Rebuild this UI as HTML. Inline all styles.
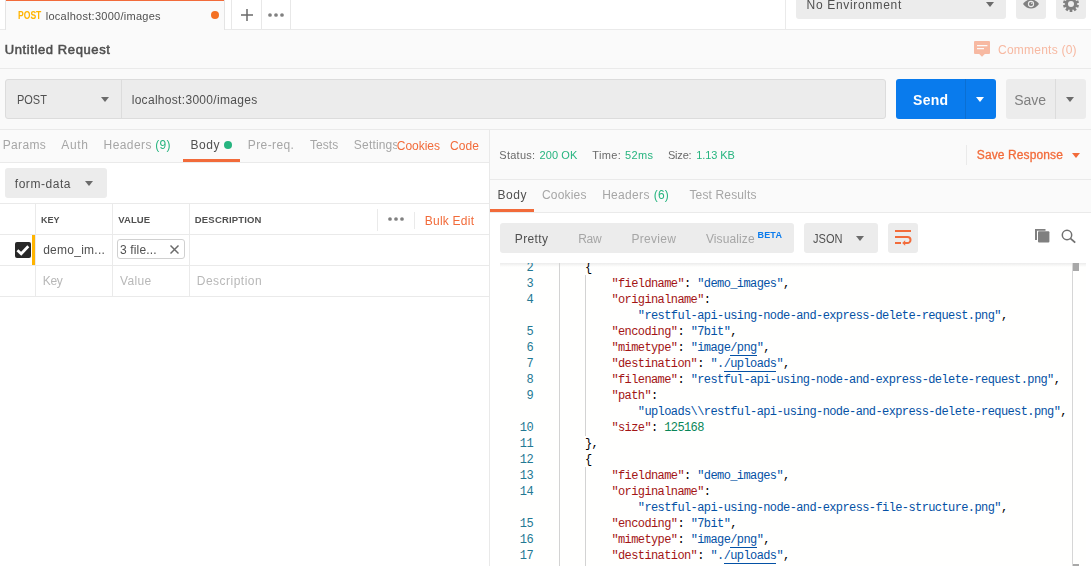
<!DOCTYPE html>
<html>
<head>
<meta charset="utf-8">
<title>Postman</title>
<style>
*{box-sizing:border-box;margin:0;padding:0}
html,body{width:1091px;height:566px;overflow:hidden;background:#fff}
body{position:relative;font-family:"Liberation Sans",sans-serif;font-size:12px;color:#505050}
.abs{position:absolute}
.t{position:absolute;white-space:nowrap;line-height:1}
/* top tab bar */
#tabbar{left:0;top:0;width:1091px;height:30px;background:#fff;border-bottom:1px solid #eaeaea}
#tab1{left:5px;top:0;width:220px;height:30px;background:#fafafa;border-left:1px solid #e4e4e4;border-right:1px solid #e4e4e4}
#tab1o{left:6px;top:0;width:218px;height:1px;background:#f26b3a}
#tabplus{left:231px;top:-3px;width:31px;height:33px;border:1px solid #e8e8e8;border-radius:3px 0 0 0}
#tabmore{left:261px;top:-3px;width:30px;height:33px;border:1px solid #e8e8e8;border-radius:0 3px 0 0}
#envsep{left:785px;top:0;width:1px;height:30px;background:#eaeaea}
#env{left:796px;top:-12px;width:210px;height:30.5px;background:#ececec;border-radius:3px}
#eye{left:1016px;top:-12px;width:30px;height:30.5px;background:#ececec;border-radius:3px}
#gear{left:1056px;top:-12px;width:30px;height:30.5px;background:#ececec;border-radius:3px}
/* request name row */
#namerow{left:0;top:30px;width:1091px;height:39px;background:#fafafa;border-bottom:1px solid #eaeaea}
/* url row */
#urlrow{left:0;top:69px;width:1091px;height:61px;background:#fafafa;border-bottom:1px solid #eaeaea}
#urlbar{left:5px;top:79px;width:881px;height:40px;background:#ececec;border:1px solid #dcdcdc;border-radius:3px}
#urlsep{left:121px;top:79px;width:1px;height:40px;background:#dcdcdc}
#send{left:896px;top:79px;width:100px;height:40px;background:#097bed;border-radius:3px}
#sendsep{left:965px;top:79px;width:1px;height:40px;background:#0a6fd3}
#save{left:1006px;top:79px;width:80px;height:40px;background:#ececec;border-radius:3px}
#savesep{left:1055px;top:79px;width:1px;height:40px;background:#dcdcdc}
/* left pane */
#lefttabs{left:0;top:130px;width:489px;height:33px;background:#fafafa;border-bottom:1px solid #eaeaea}
#bodyul{left:183px;top:159px;width:57px;height:3px;background:#f26b3a}
#formdata{left:5px;top:168px;width:102px;height:30px;background:#ececec;border-radius:3px}
.hl{position:absolute;left:0;width:489px;height:1px;background:#eaeaea}
.vl{position:absolute;width:1px;background:#eaeaea}
/* right pane */
#rsep{left:489px;top:130px;width:1px;height:436px;background:#e9e9e9}
#statusrow{left:490px;top:130px;width:601px;height:50px;background:#fafafa;border-bottom:1px solid #eaeaea}
#rtabs{left:490px;top:180px;width:601px;height:33px;background:#fafafa;border-bottom:1px solid #eaeaea}
#rbodyul{left:490px;top:209px;width:44px;height:3px;background:#f26b3a}
#viewgrp{left:500px;top:223px;width:294px;height:29.6px;background:#ececec;border-radius:3px}
#jsonbtn{left:804px;top:223px;width:74px;height:29.6px;background:#ececec;border-radius:3px}
#wrapbtn{left:888px;top:223px;width:30px;height:29.6px;background:#ececec;border-radius:3px}
#editor{left:500px;top:263px;width:586px;height:303px;overflow:hidden;background:#fffffe}
#edshadow{left:0;top:0;width:586px;height:4px;background:linear-gradient(to bottom,#ececec,rgba(255,255,254,0))}
.ln{position:absolute;left:0;width:33px;text-align:right;color:#237893;font-family:"Liberation Mono",monospace;font-size:12px;letter-spacing:-0.6px;line-height:16px;height:16px;white-space:pre}
.cl{position:absolute;left:32.200px;color:#000;font-family:"Liberation Mono",monospace;font-size:12px;letter-spacing:-0.6px;line-height:16px;height:16px;white-space:pre}
.k{color:#a31515}.s{color:#0451a5}.n{color:#098658}
.u{border-bottom:1px solid #0451a5}
.guide{position:absolute;width:1px;background:#d3d3d3}
</style>
</head>
<body>
<!-- top tab bar -->
<div id="tabbar" class="abs"></div>
<div id="tab1" class="abs"></div>
<div id="tab1o" class="abs"></div>
<div class="abs" style="left:210.700px;top:10.700px;width:8.600px;height:8.600px;border-radius:50%;background:#f47023"></div>
<div id="tabplus" class="abs"></div>
<div id="tabmore" class="abs"></div>
<svg class="abs" style="left:240px;top:8px" width="14" height="14" viewBox="0 0 14 14"><path d="M7 1v12M1 7h12" stroke="#6b6b6b" stroke-width="1.5" fill="none"/></svg>
<svg class="abs" style="left:268px;top:13px" width="16" height="4" viewBox="0 0 16 4"><circle cx="2" cy="2" r="1.85" fill="#808080"/><circle cx="8" cy="2" r="1.85" fill="#808080"/><circle cx="14" cy="2" r="1.85" fill="#808080"/></svg>
<div id="envsep" class="abs"></div>
<div id="env" class="abs"></div>
<svg class="abs" style="left:986px;top:2.4px" width="8" height="5" viewBox="0 0 8 5"><path d="M0 0h8L4 5z" fill="#6b6b6b"/></svg>
<div id="eye" class="abs"></div>
<div id="gear" class="abs"></div>
<svg class="abs" style="left:1023px;top:-0.8px" width="16" height="10" viewBox="0 0 16 9.200"><path d="M0 4.600C2.400 1.400 5 0 8 0s5.600 1.400 8 4.600C13.600 7.800 11 9.200 8 9.200S2.400 7.800 0 4.600z" fill="#808080"/><circle cx="8" cy="4.600" r="3.150" fill="#ececec"/><circle cx="8" cy="4.600" r="2.100" fill="#808080"/><circle cx="8.800" cy="3.900" r="0.700" fill="#ececec"/></svg>
<svg class="abs" style="left:1062px;top:-4.900px" width="18" height="18" viewBox="-9 -9 18 18"><g fill="#808080"><circle r="6"/><rect x="-1.350" y="-8" width="2.700" height="4" transform="rotate(0)"/><rect x="-1.350" y="-8" width="2.700" height="4" transform="rotate(36)"/><rect x="-1.350" y="-8" width="2.700" height="4" transform="rotate(72)"/><rect x="-1.350" y="-8" width="2.700" height="4" transform="rotate(108)"/><rect x="-1.350" y="-8" width="2.700" height="4" transform="rotate(144)"/><rect x="-1.350" y="-8" width="2.700" height="4" transform="rotate(180)"/><rect x="-1.350" y="-8" width="2.700" height="4" transform="rotate(216)"/><rect x="-1.350" y="-8" width="2.700" height="4" transform="rotate(252)"/><rect x="-1.350" y="-8" width="2.700" height="4" transform="rotate(288)"/><rect x="-1.350" y="-8" width="2.700" height="4" transform="rotate(324)"/></g><circle r="3" fill="#ececec"/></svg>

<!-- request name row -->
<div id="namerow" class="abs"></div>
<svg class="abs" style="left:974px;top:41px" width="16" height="16" viewBox="0 0 16 16"><path d="M1 0h14a1 1 0 0 1 1 1v11a1 1 0 0 1-1 1h-4.200L8 15.800 5.200 13H1a1 1 0 0 1-1-1V1a1 1 0 0 1 1-1z" fill="#f7b9a2"/><path d="M3 4.600h10.400M3 7.600h7" stroke="#fafafa" stroke-width="1.400"/></svg>

<!-- url row -->
<div id="urlrow" class="abs"></div>
<div id="urlbar" class="abs"></div>
<div id="urlsep" class="abs"></div>
<svg class="abs" style="left:101px;top:97px" width="8" height="5" viewBox="0 0 8 5"><path d="M0 0h8L4 5z" fill="#6b6b6b"/></svg>
<div id="send" class="abs"></div>
<div id="sendsep" class="abs"></div>
<svg class="abs" style="left:976px;top:97px" width="8" height="5" viewBox="0 0 8 5"><path d="M0 0h8L4 5z" fill="#fff"/></svg>
<div id="save" class="abs"></div>
<div id="savesep" class="abs"></div>
<svg class="abs" style="left:1066px;top:97px" width="8" height="5" viewBox="0 0 8 5"><path d="M0 0h8L4 5z" fill="#6b6b6b"/></svg>

<!-- left pane tabs -->
<div id="lefttabs" class="abs"></div>
<div class="abs" style="left:224px;top:141px;width:8.4px;height:8.4px;border-radius:50%;background:#26b47f"></div>
<div id="bodyul" class="abs"></div>

<div id="formdata" class="abs"></div>
<svg class="abs" style="left:85px;top:181.4px" width="8" height="5" viewBox="0 0 8 5"><path d="M0 0h8L4 5z" fill="#6b6b6b"/></svg>

<!-- table -->
<div class="hl" style="top:203px"></div>
<div class="hl" style="top:234px"></div>
<div class="hl" style="top:265px"></div>
<div class="hl" style="top:296px"></div>
<div class="vl" style="left:35px;top:203px;height:94px"></div>
<div class="vl" style="left:112px;top:203px;height:94px"></div>
<div class="vl" style="left:189px;top:203px;height:94px"></div>
<div class="vl" style="left:377px;top:209px;height:22px"></div>
<div class="vl" style="left:414px;top:212px;height:17px"></div>
<svg class="abs" style="left:388px;top:217px" width="16" height="4" viewBox="0 0 16 4"><circle cx="2" cy="2" r="1.850" fill="#808080"/><circle cx="8" cy="2" r="1.850" fill="#808080"/><circle cx="14" cy="2" r="1.850" fill="#808080"/></svg>
<!-- row 1 -->
<div class="abs" style="left:15px;top:242px;width:16px;height:16px;background:#282828;border-radius:2px"></div>
<svg class="abs" style="left:15px;top:242px" width="16" height="16" viewBox="0 0 16 16"><path d="M2.400 8.300L6.200 11.800L13.300 4.300" stroke="#fff" stroke-width="2.700" fill="none"/></svg>
<div class="abs" style="left:32px;top:235px;width:3px;height:30px;background:#ffb400"></div>
<div class="abs" style="left:117px;top:239px;width:68px;height:20px;border:1px solid #d0d0d0;border-radius:3px;background:#fff"></div>
<svg class="abs" style="left:169.600px;top:244.800px" width="9" height="9" viewBox="0 0 9 9"><path d="M0.500 0.500l8 8M8.500 0.500l-8 8" stroke="#6b6b6b" stroke-width="1.450" fill="none"/></svg>
<!-- row 2 -->

<!-- right pane -->
<div id="rsep" class="abs"></div>
<div id="statusrow" class="abs"></div>
<div class="vl" style="left:966px;top:145px;height:20px"></div>
<svg class="abs" style="left:1072.4px;top:153px" width="8" height="5" viewBox="0 0 8 5"><path d="M0 0h8L4 5z" fill="#f26b3a"/></svg>

<div id="rtabs" class="abs"></div>
<div id="rbodyul" class="abs"></div>

<div id="viewgrp" class="abs"></div>
<div id="jsonbtn" class="abs"></div>
<svg class="abs" style="left:856px;top:236px" width="8" height="5" viewBox="0 0 8 5"><path d="M0 0h8L4 5z" fill="#6b6b6b"/></svg>
<div id="wrapbtn" class="abs"></div>
<svg class="abs" style="left:894px;top:229px" width="19" height="18" viewBox="0 0 19 18"><path d="M1 2H17M1 8H13.500a3 3 0 0 1 0 6H11M1 14H7" stroke="#f26b3a" stroke-width="2" fill="none"/><path d="M8.200 14L11.200 11.200V16.800z" fill="#f26b3a"/></svg>
<svg class="abs" style="left:1034px;top:228px" width="17" height="16" viewBox="0 0 17 16"><path d="M1 1h10.500v1.800H3v9.200H1z" fill="#808080"/><rect x="4" y="3.200" width="11.400" height="11.400" rx="1" fill="#808080"/></svg>
<svg class="abs" style="left:1060px;top:228px" width="17" height="16" viewBox="0 0 17 16"><circle cx="7" cy="7" r="4.700" stroke="#707070" stroke-width="1.500" fill="none"/><path d="M10.400 10.400l4.800 4.200" stroke="#707070" stroke-width="1.800"/></svg>

<!-- editor -->
<div id="editor" class="abs">
<div id="edshadow" class="abs"></div>
<div id="edlines" class="abs" style="left:0;top:-3px;width:586px;height:320px">
<div class="guide" style="left:59px;top:0;height:320px"></div>
<div class="guide" style="left:85px;top:15px;height:161px"></div>
<div class="guide" style="left:85px;top:207px;height:113px"></div>
<div class="ln" style="top:0px">2</div>
<div class="cl" style="top:0px">        {</div>
<div class="ln" style="top:16px">3</div>
<div class="cl" style="top:16px">            <span class="k">&quot;fieldname&quot;</span>: <span class="s">&quot;demo_images&quot;</span>,</div>
<div class="ln" style="top:32px">4</div>
<div class="cl" style="top:32px">            <span class="k">&quot;originalname&quot;</span>:</div>
<div class="cl" style="top:48px">                <span class="s">&quot;restful-api-using-node-and-express-delete-request.png&quot;</span>,</div>
<div class="ln" style="top:64px">5</div>
<div class="cl" style="top:64px">            <span class="k">&quot;encoding&quot;</span>: <span class="s">&quot;7bit&quot;</span>,</div>
<div class="ln" style="top:80px">6</div>
<div class="cl" style="top:80px">            <span class="k">&quot;mimetype&quot;</span>: <span class="s">&quot;image</span><span class="s u">/png</span><span class="s">&quot;</span>,</div>
<div class="ln" style="top:96px">7</div>
<div class="cl" style="top:96px">            <span class="k">&quot;destination&quot;</span>: <span class="s">&quot;.</span><span class="s u">/uploads</span><span class="s">&quot;</span>,</div>
<div class="ln" style="top:112px">8</div>
<div class="cl" style="top:112px">            <span class="k">&quot;filename&quot;</span>: <span class="s">&quot;restful-api-using-node-and-express-delete-request.png&quot;</span>,</div>
<div class="ln" style="top:128px">9</div>
<div class="cl" style="top:128px">            <span class="k">&quot;path&quot;</span>:</div>
<div class="cl" style="top:144px">                <span class="s">&quot;uploads\\restful-api-using-node-and-express-delete-request.png&quot;</span>,</div>
<div class="ln" style="top:160px">10</div>
<div class="cl" style="top:160px">            <span class="k">&quot;size&quot;</span>: <span class="n">125168</span></div>
<div class="ln" style="top:176px">11</div>
<div class="cl" style="top:176px">        },</div>
<div class="ln" style="top:192px">12</div>
<div class="cl" style="top:192px">        {</div>
<div class="ln" style="top:208px">13</div>
<div class="cl" style="top:208px">            <span class="k">&quot;fieldname&quot;</span>: <span class="s">&quot;demo_images&quot;</span>,</div>
<div class="ln" style="top:224px">14</div>
<div class="cl" style="top:224px">            <span class="k">&quot;originalname&quot;</span>:</div>
<div class="cl" style="top:240px">                <span class="s">&quot;restful-api-using-node-and-express-file-structure.png&quot;</span>,</div>
<div class="ln" style="top:256px">15</div>
<div class="cl" style="top:256px">            <span class="k">&quot;encoding&quot;</span>: <span class="s">&quot;7bit&quot;</span>,</div>
<div class="ln" style="top:272px">16</div>
<div class="cl" style="top:272px">            <span class="k">&quot;mimetype&quot;</span>: <span class="s">&quot;image</span><span class="s u">/png</span><span class="s">&quot;</span>,</div>
<div class="ln" style="top:288px">17</div>
<div class="cl" style="top:288px">            <span class="k">&quot;destination&quot;</span>: <span class="s">&quot;.</span><span class="s u">/uploads</span><span class="s">&quot;</span>,</div>
<div class="ln" style="top:304px">18</div>
<div class="cl" style="top:304px">            <span class="k">&quot;filename&quot;</span>: <span class="s">&quot;restful-api-using-node-and-express-file-structure.png&quot;</span>,</div>
</div>
<div class="abs" style="left:572px;top:0;width:1px;height:303px;background:#d6d6d6"></div>
<div class="abs" style="left:573px;top:0;width:6px;height:8px;background:#a8a8a8"></div>
<div class="abs" style="left:573px;top:301px;width:6px;height:2px;background:#a8a8a8"></div>
</div>
<div class="abs" style="left:0;top:0;width:1091px;height:566px;will-change:transform">
<div class="t" style="left:17.70px;top:11px;font-size:10px;line-height:10px;color:#ffb400;transform:scale(0.8566,1);transform-origin:0 8px;font-weight:bold">POST</div>
<div class="t" style="left:45.74px;top:11px;font-size:11px;line-height:11px;color:#505050;letter-spacing:0.269px">localhost:3000/images</div>
<div class="t" style="left:806.55px;top:-1px;font-size:12px;line-height:12px;color:#505050;letter-spacing:0.667px">No Environment</div>
<div class="t" style="left:4.72px;top:43px;font-size:13px;line-height:13px;color:#505050;letter-spacing:0.606px;-webkit-text-stroke:0.55px #505050">Untitled Request</div>
<div class="t" style="left:998.04px;top:44px;font-size:12px;line-height:12px;color:#f7b9a2;letter-spacing:0.231px">Comments (0)</div>
<div class="t" style="left:16.82px;top:94px;font-size:12px;line-height:12px;color:#505050;transform:scale(0.9153,1);transform-origin:0 10px">POST</div>
<div class="t" style="left:131.67px;top:94px;font-size:12px;line-height:12px;color:#505050;letter-spacing:0.305px">localhost:3000/images</div>
<div class="t" style="left:913.04px;top:93px;font-size:14px;line-height:14px;color:#ffffff;letter-spacing:0.260px;font-weight:bold">Send</div>
<div class="t" style="left:1014.18px;top:93px;font-size:14px;line-height:14px;color:#808080;letter-spacing:-0.038px">Save</div>
<div class="t" style="left:2.75px;top:139px;font-size:12px;line-height:12px;color:#a6a6a6;letter-spacing:0.340px">Params</div>
<div class="t" style="left:61.28px;top:139px;font-size:12px;line-height:12px;color:#a6a6a6;letter-spacing:0.657px">Auth</div>
<div class="t" style="left:103.55px;top:139px;font-size:12px;line-height:12px;color:#a6a6a6;letter-spacing:0.416px">Headers</div>
<div class="t" style="left:155.30px;top:139px;font-size:12px;line-height:12px;color:#26b47f;letter-spacing:0.253px">(9)</div>
<div class="t" style="left:190.55px;top:139px;font-size:12px;line-height:12px;color:#505050;letter-spacing:0.524px">Body</div>
<div class="t" style="left:247.75px;top:139px;font-size:12px;line-height:12px;color:#a6a6a6;letter-spacing:0.403px">Pre-req.</div>
<div class="t" style="left:309.88px;top:139px;font-size:12px;line-height:12px;color:#a6a6a6;letter-spacing:0.095px">Tests</div>
<div class="t" style="left:353.86px;top:139px;font-size:12px;line-height:12px;color:#a6a6a6;letter-spacing:0.170px">Settings</div>
<div class="abs" style="left:397px;top:134px;width:92px;height:24px;background:#fafafa"></div>
<div class="t" style="left:396.84px;top:140px;font-size:12px;line-height:12px;color:#f26b3a;letter-spacing:-0.033px">Cookies</div>
<div class="t" style="left:450.04px;top:140px;font-size:12px;line-height:12px;color:#f26b3a;letter-spacing:0.078px">Code</div>
<div class="t" style="left:14.77px;top:178px;font-size:12px;line-height:12px;color:#505050;letter-spacing:0.548px">form-data</div>
<div class="t" style="left:40.87px;top:215px;font-size:9.5px;line-height:9.5px;color:#505050;transform:scale(0.9486,1);transform-origin:0 8px;font-weight:bold">KEY</div>
<div class="t" style="left:118.27px;top:215px;font-size:9.5px;line-height:9.5px;color:#505050;letter-spacing:0.074px;font-weight:bold">VALUE</div>
<div class="t" style="left:194.84px;top:215px;font-size:9.5px;line-height:9.5px;color:#505050;letter-spacing:0.172px;font-weight:bold">DESCRIPTION</div>
<div class="t" style="left:424.75px;top:215px;font-size:12px;line-height:12px;color:#f26b3a;letter-spacing:0.236px">Bulk Edit</div>
<div class="t" style="left:43.15px;top:244px;font-size:12px;line-height:12px;color:#505050;letter-spacing:0.268px">demo_im...</div>
<div class="t" style="left:120.01px;top:244px;font-size:12px;line-height:12px;color:#505050;letter-spacing:0.145px">3 file...</div>
<div class="t" style="left:42.75px;top:275px;font-size:12px;line-height:12px;color:#b8b8b8;letter-spacing:-0.282px">Key</div>
<div class="t" style="left:119.88px;top:275px;font-size:12px;line-height:12px;color:#b8b8b8;letter-spacing:0.387px">Value</div>
<div class="t" style="left:196.75px;top:275px;font-size:12px;line-height:12px;color:#b8b8b8;letter-spacing:0.490px">Description</div>
<div class="t" style="left:499.34px;top:150px;font-size:11px;line-height:11px;color:#6a6a6a;letter-spacing:0.258px">Status:</div>
<div class="t" style="left:539.52px;top:150px;font-size:11px;line-height:11px;color:#26b47f;letter-spacing:0.101px">200 OK</div>
<div class="t" style="left:592.26px;top:150px;font-size:11px;line-height:11px;color:#6a6a6a;letter-spacing:0.374px">Time:</div>
<div class="t" style="left:625.03px;top:150px;font-size:11px;line-height:11px;color:#26b47f;letter-spacing:0.402px">52ms</div>
<div class="t" style="left:667.94px;top:150px;font-size:11px;line-height:11px;color:#6a6a6a;letter-spacing:-0.179px">Size:</div>
<div class="t" style="left:696.19px;top:150px;font-size:11px;line-height:11px;color:#26b47f;letter-spacing:-0.074px">1.13 KB</div>
<div class="t" style="left:976.86px;top:149px;font-size:12px;line-height:12px;color:#f26b3a;letter-spacing:0.102px;-webkit-text-stroke:0.3px #f26b3a">Save Response</div>
<div class="t" style="left:497.55px;top:189px;font-size:12px;line-height:12px;color:#505050;letter-spacing:0.524px">Body</div>
<div class="t" style="left:542.04px;top:189px;font-size:12px;line-height:12px;color:#a6a6a6;letter-spacing:0.167px">Cookies</div>
<div class="t" style="left:602.15px;top:189px;font-size:12px;line-height:12px;color:#a6a6a6;letter-spacing:0.316px">Headers</div>
<div class="t" style="left:653.70px;top:189px;font-size:12px;line-height:12px;color:#26b47f;letter-spacing:0.253px">(6)</div>
<div class="t" style="left:689.48px;top:189px;font-size:12px;line-height:12px;color:#a6a6a6;letter-spacing:0.143px">Test Results</div>
<div class="t" style="left:514.75px;top:233px;font-size:12px;line-height:12px;color:#505050;letter-spacing:0.394px">Pretty</div>
<div class="t" style="left:578.15px;top:233px;font-size:12px;line-height:12px;color:#a6a6a6;letter-spacing:-0.248px">Raw</div>
<div class="t" style="left:631.55px;top:233px;font-size:12px;line-height:12px;color:#a6a6a6;letter-spacing:0.275px">Preview</div>
<div class="t" style="left:705.88px;top:233px;font-size:12px;line-height:12px;color:#a6a6a6;letter-spacing:0.118px">Visualize</div>
<div class="t" style="left:757.48px;top:231px;font-size:9px;line-height:9px;color:#097bed;letter-spacing:0.193px;font-weight:bold">BETA</div>
<div class="t" style="left:812.71px;top:233px;font-size:12px;line-height:12px;color:#505050;transform:scale(0.9199,1);transform-origin:0 10px">JSON</div>
</div>
</body>
</html>
